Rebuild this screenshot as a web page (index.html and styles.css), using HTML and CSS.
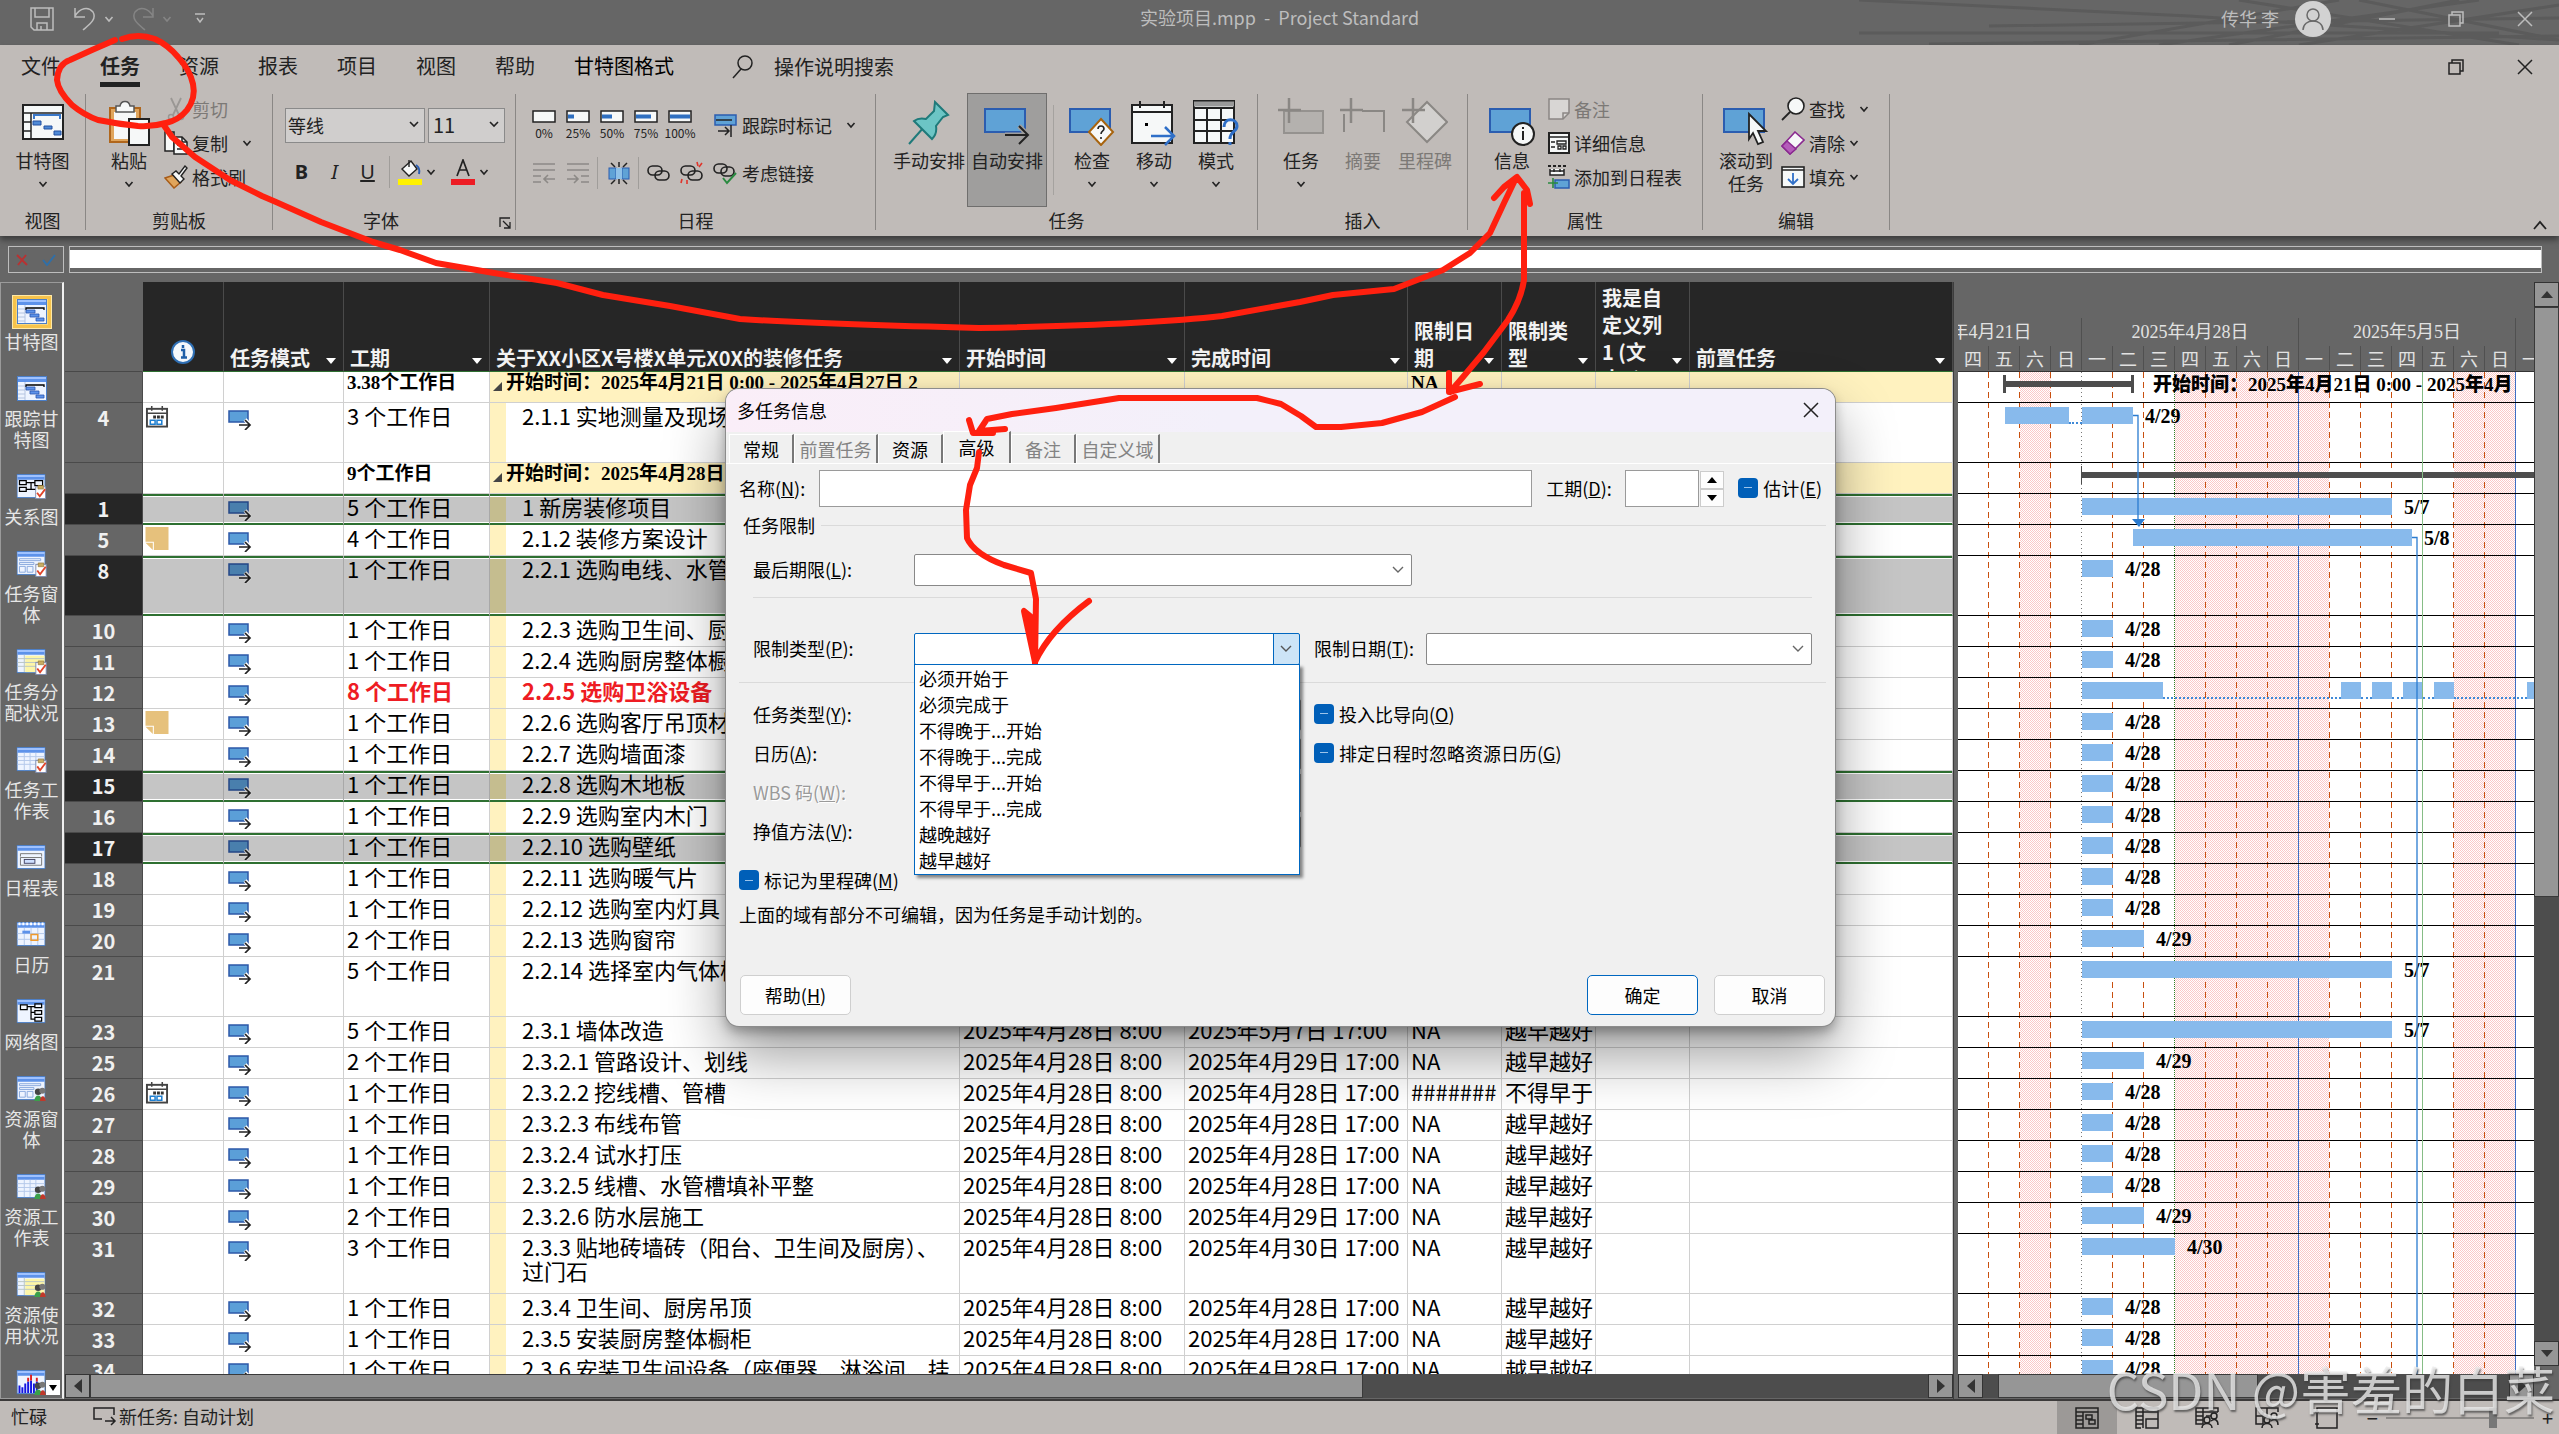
FILE: index.html
```html
<!DOCTYPE html>
<html lang="zh-CN">
<head>
<meta charset="utf-8">
<title>实验项目.mpp - Project Standard</title>
<link rel="stylesheet" href="styles.css">
</head>
<body>
<svg class="defs" aria-hidden="true">
  <symbol id="chev" viewBox="0 0 10 10"><path d="M1.500 3l3.500 4 3.500-4" fill="none" stroke="currentColor" stroke-width="1.600"/></symbol>
  <symbol id="mode" viewBox="0 0 24 20"><rect x="1" y="1" width="19" height="11" fill="#5b9fd8" stroke="#2c58a8" stroke-width="1.500"/><path d="M11 15h11M17 9.500l5 5.500-5 5" fill="none" stroke="#fff" stroke-width="4"/><path d="M11 15h11M17 10l5 5-5 5" fill="none" stroke="#222" stroke-width="1.700"/></symbol>
  <symbol id="cal" viewBox="0 0 24 24"><rect x="1.500" y="4" width="21" height="18.500" fill="#fff" stroke="#444" stroke-width="2"/><path d="M1 8.500h22M6.500 1v5M17.500 1v5" stroke="#444" stroke-width="1.600"/><path d="M8 12.500h12" stroke="#333" stroke-width="3" stroke-dasharray="3 1"/><path d="M5 16h5v4H5zM12 16h5v4h-5z" fill="#fff" stroke="#1f7fd0" stroke-width="1.600"/></symbol>
  <symbol id="note" viewBox="0 0 22 22"><path d="M0 0h22v22H8v-8H0z" fill="#e6c17c"/><path d="M0 15h7v7z" fill="#e6c17c"/></symbol>
  <symbol id="win" viewBox="0 0 30 26"><rect x=".500" y=".500" width="29" height="24" fill="#eef4ff" stroke="#4a7ec8"/><path d="M1 1h28v5H1z" fill="#5d92ea"/><path d="M1 1h28v2H1z" fill="#9fc2ff"/></symbol>
  <symbol id="v-gantt" viewBox="0 0 30 26"><use href="#win"/><path d="M1 10h7M1 14h7M1 18h7M1 22h7M8 6v18" stroke="#b4c4e0"/><path d="M9 11v-2h18v2" fill="none" stroke="#000" stroke-width="1.300"/><path d="M9 11h9v3H9zM13 15h9v3h-9zM19 19h8v3h-8z" fill="#5d92ea" stroke="#2a56b0" stroke-width=".800"/></symbol>
  <symbol id="clip" viewBox="0 0 12 16"><rect x=".500" y="2.500" width="11" height="13" fill="#fff" stroke="#7d8bb0"/><path d="M3 1h6v4H3z" fill="#c9ac62" stroke="#8a6d2c" stroke-width=".600"/><path d="M2 9l3 4 6-8" fill="none" stroke="#e0442a" stroke-width="2"/></symbol>
  <symbol id="ppl" viewBox="0 0 12 16"><circle cx="4" cy="5" r="3.500" fill="#444"/><circle cx="8.500" cy="4" r="3.200" fill="#777"/><path d="M0 15c0-8 8-8 8 0z" fill="#3ba04a"/><path d="M6 15c0-7 6-7 6 0z" fill="#c0392b"/></symbol>
  <symbol id="v-rel" viewBox="0 0 32 27"><use href="#win" width="30" height="26"/><path d="M3 7h7v4H3zM3 14h7v4H3zM19 7h8v5h-8zM10 9h9M15 9v7h-5M15 16h5" fill="none" stroke="#000" stroke-width="1.300"/><use href="#clip" x="19" y="11" width="12" height="15"/></symbol>
  <symbol id="v-form" viewBox="0 0 32 27"><use href="#win" width="30" height="26"/><path d="M3 8h22v2H3zM3 12h15v2H3zM3 16h6v6H3zM11 16h6v6h-6z" fill="none" stroke="#8aaade"/></symbol>
  <symbol id="v-sheet" viewBox="0 0 32 27"><use href="#win" width="30" height="26"/><path d="M1 10h28M1 14h28M1 18h28M8 6v18M14 6v18M20 6v18" stroke="#b4c8ea"/></symbol>
  <symbol id="v-usage" viewBox="0 0 32 27"><use href="#win" width="30" height="26"/><path d="M9 7h20v17H9z" fill="#fdf6a8"/><path d="M1 10h28M1 14h28M1 18h28M8 6v18" stroke="#b9c6c4"/></symbol>
  <symbol id="v-time" viewBox="0 0 32 27"><use href="#win" width="30" height="26"/><path d="M4 12V9h22v3M4 13h22v8H4z" fill="none" stroke="#777"/><rect x="8" y="15" width="11" height="4" fill="#cfe0ff" stroke="#446"/></symbol>
  <symbol id="v-cal" viewBox="0 0 32 27"><use href="#win" width="30" height="26"/><path d="M2 2h26" stroke="#fff" stroke-width="3" stroke-dasharray="2 2"/><path d="M1 12h28M1 18h28M8 6v18M15 6v18M22 6v18" stroke="#b4c8ea"/><path d="M6 9h8v3H6z" fill="#5d92ea"/><path d="M15 13h7v6h-7z" fill="none" stroke="#f09a2c" stroke-width="1.500"/></symbol>
  <symbol id="v-net" viewBox="0 0 32 27"><use href="#win" width="30" height="26"/><path d="M4 6h7v5H4zM19 5h7v4h-7zM19 12h7v4h-7zM19 19h7v4h-7zM11 8h8M15 8v13h4M15 14h4" fill="#fff" fill-opacity=".300" stroke="#000" stroke-width="1.300"/></symbol>
  <symbol id="v-graph" viewBox="0 0 32 27"><use href="#win" width="30" height="26"/><path d="M3 24v-8M6 24v-6M9 24V14M12 24V12M15 24V11M18 24V14M21 24V12" stroke="#1414e0" stroke-width="2"/><path d="M12 12V8M15 11V5M21 12V8" stroke="#e02020" stroke-width="2"/></symbol>
</svg>

<header class="titlebar">
  <div class="quick">
    <button aria-label="保存"><svg width="24" height="24" viewBox="0 0 24 24"><path d="M1 1h22v22H4l-3-3zM5 1v9h14V1M7 23v-7h10v7M11 19v4"/></svg></button>
    <button aria-label="撤消"><svg width="22" height="24" viewBox="0 0 22 24"><path d="M1 1v9h10M1 9C6 1 14-1 19 5c4 7-3 12-10 18"/></svg></button>
    <button class="tiny" aria-label="撤消选项"><svg width="10" height="10"><use href="#chev"/></svg></button>
    <button class="off" aria-label="恢复"><svg width="22" height="24" viewBox="0 0 22 24"><path d="M21 1v9H11M21 9C16 1 8-1 3 5c-4 7 3 12 10 18"/></svg></button>
    <button class="off tiny" aria-label="恢复选项"><svg width="10" height="10"><use href="#chev"/></svg></button>
    <button class="more" aria-label="自定义快速访问工具栏"><svg width="12" height="12" viewBox="0 0 12 12"><path d="M1 1h10M3 5l3 4 3-4"/></svg></button>
  </div>
  <h1>实验项目.mpp&nbsp; - &nbsp;Project Standard</h1>
  <div class="account">
    <svg class="streaks" viewBox="0 0 700 45" preserveAspectRatio="none" aria-hidden="true"><path d="M0 0L330 16 700 40M130 26L700 18M0 33h640M70 44L700 36M220 45L480 0M300 45L620 0M370 45L600 0M380 0L660 45M500 0L700 40M440 45L700 5"/></svg>
    <span>传华 李</span>
    <svg class="avatar" width="36" height="36" viewBox="0 0 36 36"><circle cx="18" cy="18" r="18" fill="#d2d2d2"/><g fill="none" stroke="#6a6a6a" stroke-width="1.500"><circle cx="18" cy="14" r="6"/><path d="M8 29c0-12 20-12 20 0"/></g></svg>
    <button aria-label="最小化"><svg width="16" height="16" viewBox="0 0 16 16"><path d="M0 8h16"/></svg></button>
    <button aria-label="向下还原"><svg width="16" height="16" viewBox="0 0 16 16"><path d="M1 4h11v11H1zM4 4V1h11v11h-3"/></svg></button>
    <button aria-label="关闭"><svg width="16" height="16" viewBox="0 0 16 16"><path d="M1 1l14 14M15 1L1 15"/></svg></button>
  </div>
</header>

<div class="ribbon">
  <nav class="tabs">
    <a href="#">文件</a><a href="#" class="on">任务</a><a href="#">资源</a><a href="#">报表</a><a href="#">项目</a><a href="#">视图</a><a href="#">帮助</a><a href="#" class="dark">甘特图格式</a>
    <label class="tell"><svg width="22" height="24" viewBox="0 0 22 24"><circle cx="13" cy="8" r="7"/><path d="M9 14l-8 9"/></svg><input type="text" value="操作说明搜索" aria-label="操作说明搜索"></label>
    <div class="winbtns">
      <button aria-label="还原窗口"><svg width="16" height="16" viewBox="0 0 16 16"><path d="M1 4h11v11H1zM4 4V1h11v11h-3"/></svg></button>
      <button aria-label="关闭窗口"><svg width="16" height="16" viewBox="0 0 16 16"><path d="M1 1l14 14M15 1L1 15"/></svg></button>
    </div>
  </nav>
  <div class="groups">
    <section class="group g-view">
      <div class="body">
        <button class="big"><svg width="42" height="36" viewBox="0 0 42 36"><path d="M1 1h40v34H1z" fill="#f6f8f8" stroke="#222" stroke-width="2"/><path d="M1 9h40M9 9v26M1 18h8M1 27h8" stroke="#222" stroke-width="1.500"/><path d="M12 15v-4h26v4" fill="none" stroke="#3b78c8" stroke-width="2"/><path d="M11 17h8v4h-8zM22 22h8v3h-8zM32 27h7v4h-7z" fill="#4f8ad6" stroke="#2450a0"/></svg><span>甘特图</span><svg class="ch"><use href="#chev"/></svg></button>
      </div>
      <h2>视图</h2>
    </section>
    <section class="group g-clip">
      <div class="body">
        <button class="big"><svg width="42" height="46" viewBox="0 0 42 46"><rect x="2" y="8" width="30" height="34" fill="#e0a55c" stroke="#b0661c" stroke-width="2"/><rect x="6" y="12" width="22" height="27" fill="#f6f8f8"/><path d="M8 12V6h4c1-6 9-6 10 0h4v6z" fill="#f6f8f8" stroke="#555" stroke-width="1.500"/><rect x="21" y="19" width="20" height="26" fill="#f6f8f8" stroke="#222" stroke-width="2"/></svg><span>粘贴</span><svg class="ch"><use href="#chev"/></svg></button>
        <div class="stack">
          <button class="off"><svg width="24" height="24" viewBox="0 0 24 24"><path d="M7 1l8 17M17 1L9 18" fill="none" stroke="#9a9794" stroke-width="1.800"/><circle cx="7" cy="20" r="2.500" fill="none" stroke="#9a9794" stroke-width="1.500"/><circle cx="17" cy="20" r="2.500" fill="none" stroke="#9a9794" stroke-width="1.500"/></svg>剪切</button>
          <button><svg width="24" height="24" viewBox="0 0 24 24"><path d="M1 1h9v19H1z" fill="#f6f8f8" stroke="#222" stroke-width="1.500"/><path d="M10 6h8l5 5v12H10z" fill="#f6f8f8" stroke="#222" stroke-width="1.500"/><path d="M18 6v5h5M13 14h7M13 18h7" fill="none" stroke="#222" stroke-width="1.500"/></svg>复制<svg class="ch wide"><use href="#chev"/></svg></button>
          <button><svg width="24" height="24" viewBox="0 0 24 24"><path d="M10 10L1 13l9 10 7-6z" fill="#e0a55c" stroke="#a85c18" stroke-width="1.500"/><path d="M8 9l4-3 3 3 6-8 2 2-6 8 3 3-4 4z" fill="#f6f8f8" stroke="#222" stroke-width="1.400"/></svg>格式刷</button>
        </div>
      </div>
      <h2>剪贴板</h2>
    </section>
    <section class="group g-font">
      <div class="body col">
        <div class="line combos"><select class="face" aria-label="字体"><option>等线</option></select><select class="size" aria-label="字号"><option>11</option></select></div>
        <div class="line fmt">
          <button aria-label="加粗"><b>B</b></button><button aria-label="倾斜"><i>I</i></button><button aria-label="下划线"><u>U</u></button><span class="vr"></span>
          <button aria-label="背景色"><svg width="24" height="26" viewBox="0 0 24 26"><path d="M4 10L13 2l6 8-8 7z" fill="#f6f8f8" stroke="#222" stroke-width="1.400"/><path d="M11 1v7" stroke="#222" stroke-width="1.400"/><path d="M18 6c3 2 4 5 3 9" fill="none" stroke="#2b5db0" stroke-width="2"/><path d="M0 20h24v6H0z" fill="#fff200"/></svg></button><svg class="ch"><use href="#chev"/></svg>
          <button aria-label="字体颜色"><svg width="24" height="26" viewBox="0 0 24 26"><path d="M6 17L12 1l6 16M8 11h8" fill="none" stroke="#222" stroke-width="1.700"/><path d="M0 20h24v6H0z" fill="#ed1c24"/></svg></button><svg class="ch"><use href="#chev"/></svg>
        </div>
      </div>
      <h2>字体</h2>
      <button class="launch" aria-label="字体设置"><svg width="12" height="12" viewBox="0 0 12 12"><path d="M1 10V1h10M4 4l7 7M11 5v6H5" fill="none" stroke="#222" stroke-width="1.300"/></svg></button>
    </section>
    <section class="group g-sched">
      <div class="body col">
        <div class="line pct">
          <button><svg width="24" height="13" viewBox="0 0 24 13"><rect x="1" y="1" width="22" height="11" fill="#f6f8f8" stroke="#222" stroke-width="1.500"/></svg>0%</button>
          <button><svg width="24" height="13" viewBox="0 0 24 13"><rect x="1" y="1" width="22" height="11" fill="#f6f8f8" stroke="#222" stroke-width="1.500"/><path d="M2 6.500h6" stroke="#2f6fc0" stroke-width="4"/></svg>25%</button>
          <button><svg width="24" height="13" viewBox="0 0 24 13"><rect x="1" y="1" width="22" height="11" fill="#f6f8f8" stroke="#222" stroke-width="1.500"/><path d="M2 6.500h10" stroke="#2f6fc0" stroke-width="4"/></svg>50%</button>
          <button><svg width="24" height="13" viewBox="0 0 24 13"><rect x="1" y="1" width="22" height="11" fill="#f6f8f8" stroke="#222" stroke-width="1.500"/><path d="M2 6.500h15" stroke="#2f6fc0" stroke-width="4"/></svg>75%</button>
          <button><svg width="24" height="13" viewBox="0 0 24 13"><rect x="1" y="1" width="22" height="11" fill="#f6f8f8" stroke="#222" stroke-width="1.500"/><path d="M2 6.500h20" stroke="#2f6fc0" stroke-width="4"/></svg>100%</button>
          <button class="text"><svg width="24" height="24" viewBox="0 0 24 24"><rect x="1" y="2" width="21" height="10" fill="#5fa2d6" stroke="#2b5db0" stroke-width="1.500"/><path d="M2 7h16" stroke="#222" stroke-width="1.500"/><path d="M4 18h11M11 14l4 4-4 4M17 12v12" fill="none" stroke="#222" stroke-width="1.500"/></svg>跟踪时标记<svg class="ch wide"><use href="#chev"/></svg></button>
        </div>
        <div class="line links">
          <button class="off" aria-label="降级"><svg width="22" height="22" viewBox="0 0 22 22"><path d="M0 2h22M0 8h22M0 14h8M0 20h8M22 17H11M15 13l-4 4 4 4" fill="none" stroke="#8c8986" stroke-width="1.600"/></svg></button>
          <button class="off" aria-label="升级"><svg width="22" height="22" viewBox="0 0 22 22"><path d="M0 2h22M0 8h22M14 14h8M14 20h8M0 17h11M7 13l4 4-4 4" fill="none" stroke="#8c8986" stroke-width="1.600"/></svg></button>
          <span class="vr"></span>
          <button aria-label="拆分任务"><svg width="24" height="24" viewBox="0 0 24 24"><rect x="2" y="7" width="7" height="11" fill="#5fa2d6" stroke="#2b5db0"/><rect x="15" y="7" width="7" height="11" fill="#5fa2d6" stroke="#2b5db0"/><path d="M9 7h6v11H9z" fill="#8fc1e8"/><path d="M12 1v5M12 18v5M4 2l4 4M20 2l-4 4M4 23l4-4M20 23l-4-4" stroke="#222" stroke-width="1.500"/></svg></button>
          <span class="vr"></span>
          <button aria-label="链接"><svg width="26" height="20" viewBox="0 0 26 20"><g fill="none" stroke="#222" stroke-width="1.600"><rect x="2" y="3" width="14" height="9" rx="4.500"/><rect x="9" y="8" width="14" height="9" rx="4.500"/></g></svg></button>
          <button aria-label="取消链接"><svg width="26" height="24" viewBox="0 0 26 24"><g fill="none" stroke="#222" stroke-width="1.600"><rect x="2" y="5" width="14" height="9" rx="4.500"/><rect x="9" y="10" width="14" height="9" rx="4.500"/></g><path d="M18 1l1 4M23 2l-3 4M3 18l-1 4M8 19v4" stroke="#e0342a" stroke-width="1.600"/></svg></button>
          <button class="text"><svg width="26" height="24" viewBox="0 0 26 24"><g fill="none" stroke="#222" stroke-width="1.600"><rect x="2" y="3" width="13" height="9" rx="4.500"/><rect x="9" y="6" width="13" height="9" rx="4.500"/></g><path d="M11 17l4 5 9-10" fill="none" stroke="#2a8a40" stroke-width="2"/></svg>考虑链接</button>
        </div>
      </div>
      <h2>日程</h2>
    </section>
    <section class="group g-task">
      <div class="body">
        <button class="big"><svg width="42" height="46" viewBox="0 0 42 46"><path d="M1 44l15-17" stroke="#1f7a7a" stroke-width="2"/><path d="M27 2l13 13-5 2-7 9c1 6-1 10-4 13L6 21c4-3 8-3 12-2l8-8z" fill="#6cc5c5" stroke="#1f7a7a" stroke-width="2"/></svg><span>手动安排</span></button>
        <button class="big pressed"><svg width="46" height="38" viewBox="0 0 46 38"><rect x="1" y="1" width="40" height="23" fill="#5fa2d6" stroke="#2b5db0" stroke-width="2"/><path d="M21 27h23M35 18l9 9-9 9" fill="none" stroke="#9f9e9d" stroke-width="5"/><path d="M21 27h23M35 18l9 9-9 9" fill="none" stroke="#222" stroke-width="2"/></svg><span>自动安排</span></button>
        <span class="vr"></span>
        <button class="big"><svg width="46" height="38" viewBox="0 0 46 38"><rect x="1" y="1" width="40" height="23" fill="#5fa2d6" stroke="#2b5db0" stroke-width="2"/><path d="M32 11l12 13-12 13-12-13z" fill="#f6f8f8" stroke="#a8640e" stroke-width="2"/><path d="M29 21c0-4 6-4 6 0 0 2-3 2-3 5M32 29v2" fill="none" stroke="#222" stroke-width="1.600"/></svg><span>检查</span><svg class="ch"><use href="#chev"/></svg></button>
        <button class="big"><svg width="46" height="46" viewBox="0 0 46 46"><rect x="1" y="5" width="40" height="38" fill="#f6f8f8" stroke="#222" stroke-width="2"/><path d="M1 12h40M9 1v7M33 1v7" stroke="#222" stroke-width="2"/><path d="M14 23h3v3h-3z"/><path d="M20 36h23M34 27l9 9-9 9" fill="none" stroke="#2f6fc8" stroke-width="2.500"/></svg><span>移动</span><svg class="ch"><use href="#chev"/></svg></button>
        <button class="big"><svg width="46" height="46" viewBox="0 0 46 46"><rect x="1" y="1" width="40" height="42" fill="#f6f8f8" stroke="#222" stroke-width="2"/><path d="M1 4h40" stroke="#999" stroke-width="5"/><path d="M1 8h40M1 20h40M1 31h40M14 8v35M28 8v35" stroke="#222" stroke-width="2"/><path d="M31 27c0-10 13-9 13-1 0 6-7 5-7 13M37 42v3" fill="none" stroke="#2f6fc8" stroke-width="3"/></svg><span>模式</span><svg class="ch"><use href="#chev"/></svg></button>
      </div>
      <h2>任务</h2>
    </section>
    <section class="group g-ins">
      <div class="body">
        <button class="big"><svg width="46" height="48" viewBox="0 0 46 48"><rect x="6" y="13" width="39" height="22" fill="#b4b1ae" stroke="#95928f" stroke-width="2"/><path d="M11 0v25M0 12h23" stroke="#8a8784" stroke-width="2.500"/></svg><span>任务</span><svg class="ch"><use href="#chev"/></svg></button>
        <button class="big off"><svg width="46" height="48" viewBox="0 0 46 48"><path d="M4 34V16M22 13h22v21" fill="none" stroke="#8a8784" stroke-width="2"/><path d="M11 0v25M0 12h23" stroke="#8a8784" stroke-width="2.500"/></svg><span>摘要</span></button>
        <button class="big off"><svg width="46" height="48" viewBox="0 0 46 48"><path d="M25 4l20 20-20 20L5 24z" fill="#d2d0ce" stroke="#8a8784" stroke-width="2"/><path d="M11 0v25M0 12h23" stroke="#8a8784" stroke-width="2.500"/></svg><span>里程碑</span></button>
      </div>
      <h2>插入</h2>
    </section>
    <section class="group g-prop">
      <div class="body">
        <button class="big"><svg width="46" height="38" viewBox="0 0 46 38"><rect x="1" y="1" width="40" height="23" fill="#5fa2d6" stroke="#2b5db0" stroke-width="2"/><circle cx="34" cy="26" r="11" fill="#f6f8f8" stroke="#222" stroke-width="2"/><path d="M34 23v9M34 19v2" stroke="#222" stroke-width="2"/></svg><span>信息</span></button>
        <div class="stack">
          <button class="off"><svg width="22" height="22" viewBox="0 0 22 22"><path d="M1 1h20v14l-6 6H1z" fill="#d8d6d4" stroke="#8a8784" stroke-width="1.500"/><path d="M21 15h-6v6" fill="none" stroke="#8a8784" stroke-width="1.500"/></svg>备注</button>
          <button><svg width="22" height="22" viewBox="0 0 22 22"><rect x="1" y="1" width="20" height="20" fill="#f6f8f8" stroke="#222" stroke-width="2"/><path d="M1 5h20M3 10h4M9 9h9v3H9zM3 15h4M10 14h3v3h-3zM15 14h3v3h-3z" fill="none" stroke="#222" stroke-width="1.300"/></svg>详细信息</button>
          <button><svg width="22" height="24" viewBox="0 0 22 24"><path d="M0 1h18" stroke="#222" stroke-width="2" stroke-dasharray="3 2"/><path d="M2 4v6h14V4M2 6h14M6 4v3M12 4v3" fill="#f6f8f8" stroke="#222" stroke-width="1.500"/><rect x="7" y="15" width="14" height="8" fill="#5fa2d6" stroke="#2b5db0" stroke-width="1.500"/><path d="M5 13v10M0 18h10" stroke="#2a8a40" stroke-width="1.600"/></svg>添加到日程表</button>
        </div>
      </div>
      <h2>属性</h2>
    </section>
    <section class="group g-edit">
      <div class="body">
        <button class="big scrollto"><svg width="46" height="38" viewBox="0 0 46 38"><rect x="1" y="1" width="40" height="23" fill="#5fa2d6" stroke="#2b5db0" stroke-width="2"/><path d="M26 6l17 17h-8l5 11-5 2-5-11-4 6z" fill="#f6f8f8" stroke="#222" stroke-width="1.800"/></svg><span>滚动到<br>任务</span></button>
        <div class="stack">
          <button><svg width="24" height="24" viewBox="0 0 24 24"><circle cx="15" cy="9" r="8" fill="#f6f8f8" stroke="#222" stroke-width="1.600"/><path d="M9 15l-8 8" stroke="#222" stroke-width="1.800"/></svg>查找<svg class="ch wide"><use href="#chev"/></svg></button>
          <button><svg width="24" height="24" viewBox="0 0 24 24"><path d="M14 1l9 8-14 14-8-8z" fill="#f6f8f8" stroke="#8a2a90" stroke-width="1.600"/><path d="M6 10l9 8-6 5-8-8z" fill="#b45cba" stroke="#8a2a90" stroke-width="1.500"/></svg>清除<svg class="ch"><use href="#chev"/></svg></button>
          <button><svg width="24" height="22" viewBox="0 0 24 22"><rect x="1" y="1" width="22" height="20" fill="#f6f8f8" stroke="#222" stroke-width="1.600"/><path d="M1 4h22" stroke="#222" stroke-width="1.500"/><path d="M12 7v11M7 13l5 5 5-5" fill="none" stroke="#2f6fc8" stroke-width="1.800"/></svg>填充<svg class="ch"><use href="#chev"/></svg></button>
        </div>
      </div>
      <h2>编辑</h2>
    </section>
    <button class="collapse" aria-label="折叠功能区"><svg width="16" height="10" viewBox="0 0 16 10"><path d="M2 9l6-7 6 7" fill="none" stroke="#222" stroke-width="1.800"/></svg></button>
  </div>
</div>

<div class="entry">
  <div class="okbox"><button aria-label="取消输入"><svg width="12" height="12" viewBox="0 0 12 12"><path d="M1 1l10 10M10 1L2 11" stroke="#b83232" stroke-width="2"/></svg></button><button aria-label="确认输入"><svg width="14" height="12" viewBox="0 0 14 12"><path d="M1 6l4 5 8-10" fill="none" stroke="#2f6fa8" stroke-width="2"/></svg></button></div>
  <div class="entrybox"><input type="text" aria-label="输入栏"></div>
</div>

<main class="work">
  <nav class="views">
    <a href="#" class="cur"><svg><use href="#v-gantt"/></svg>甘特图</a>
    <a href="#"><svg><use href="#v-gantt"/></svg>跟踪甘<br>特图</a>
    <a href="#"><svg><use href="#v-rel"/></svg>关系图</a>
    <a href="#"><svg><use href="#v-form"/><use href="#clip" x="19" y="11" width="12" height="15"/></svg>任务窗<br>体</a>
    <a href="#"><svg><use href="#v-usage"/><use href="#clip" x="19" y="11" width="12" height="15"/></svg>任务分<br>配状况</a>
    <a href="#"><svg><use href="#v-sheet"/><use href="#clip" x="19" y="11" width="12" height="15"/></svg>任务工<br>作表</a>
    <a href="#"><svg><use href="#v-time"/></svg>日程表</a>
    <a href="#"><svg><use href="#v-cal"/></svg>日历</a>
    <a href="#"><svg><use href="#v-net"/></svg>网络图</a>
    <a href="#"><svg><use href="#v-form"/><use href="#ppl" x="18" y="11" width="12" height="15"/></svg>资源窗<br>体</a>
    <a href="#"><svg><use href="#v-sheet"/><use href="#ppl" x="18" y="11" width="12" height="15"/></svg>资源工<br>作表</a>
    <a href="#"><svg><use href="#v-usage"/><use href="#ppl" x="18" y="11" width="12" height="15"/></svg>资源使<br>用状况</a>
    <a href="#" aria-label="资源图表"><svg><use href="#v-graph"/><use href="#ppl" x="18" y="11" width="12" height="15"/></svg></a>
    <button class="viewmore" aria-label="更多视图"><svg width="8" height="6" viewBox="0 0 8 6"><path d="M0 0h8L4 6z"/></svg></button>
  </nav>

  <section class="pane">
    <div class="clip">
      <table class="grid">
        <colgroup><col class="c-id"><col class="c-info"><col class="c-mode"><col class="c-dur"><col class="c-name"><col class="c-start"><col class="c-fin"><col class="c-s"><col class="c-s"><col class="c-s"><col></colgroup>
        <thead><tr>
          <th class="corner"></th>
          <th><div class="hd mid"><svg width="26" height="26" viewBox="0 0 26 26"><circle cx="13" cy="13" r="11" fill="#f4f8fc" stroke="#2f6fb4" stroke-width="2"/><path d="M11 11h3v7M11 18.500h6M13 6v3" fill="none" stroke="#1f5fa8" stroke-width="2.500"/></svg></div></th>
          <th><div class="hd">任务模式<i></i></div></th>
          <th><div class="hd">工期<i></i></div></th>
          <th><div class="hd">关于XX小区X号楼X单元X0X的装修任务<i></i></div></th>
          <th><div class="hd">开始时间<i></i></div></th>
          <th><div class="hd">完成时间<i></i></div></th>
          <th><div class="hd"><span>限制日期</span><i></i></div></th>
          <th><div class="hd"><span>限制类型</span><i></i></div></th>
          <th><div class="hd tall"><span>我是自定义列<br>1 (文<br>本1)</span><i></i></div></th>
          <th><div class="hd">前置任务<i></i></div></th>
        </tr></thead>
        <tbody>
          <tr class="grp"><th></th><td></td><td></td><td>3.38个工作日</td><td class="gname">开始时间：2025年4月21日 0:00 - 2025年4月27日 2</td><td></td><td></td><td>NA</td><td></td><td></td><td></td></tr>
          <tr class="dbl"><th>4</th><td><svg class="ind"><use href="#cal"/></svg></td><td><svg class="mode"><use href="#mode"/></svg></td><td>3 个工作日</td><td class="name">2.1.1 实地测量及现场</td><td colspan="6"></td></tr>
          <tr class="grp"><th></th><td></td><td></td><td>9个工作日</td><td class="gname">开始时间：2025年4月28日</td><td colspan="6"></td></tr>
          <tr class="sel"><th>1</th><td></td><td><svg class="mode"><use href="#mode"/></svg></td><td>5 个工作日</td><td class="name">1 新房装修项目</td><td colspan="6"></td></tr>
          <tr><th>5</th><td><svg class="ind"><use href="#note"/></svg></td><td><svg class="mode"><use href="#mode"/></svg></td><td>4 个工作日</td><td class="name">2.1.2 装修方案设计</td><td colspan="6"></td></tr>
          <tr class="sel dbl"><th>8</th><td></td><td><svg class="mode"><use href="#mode"/></svg></td><td>1 个工作日</td><td class="name">2.2.1 选购电线、水管</td><td colspan="6"></td></tr>
          <tr><th>10</th><td></td><td><svg class="mode"><use href="#mode"/></svg></td><td>1 个工作日</td><td class="name">2.2.3 选购卫生间、厨</td><td colspan="6"></td></tr>
          <tr><th>11</th><td></td><td><svg class="mode"><use href="#mode"/></svg></td><td>1 个工作日</td><td class="name">2.2.4 选购厨房整体橱</td><td colspan="6"></td></tr>
          <tr class="hot"><th>12</th><td></td><td><svg class="mode"><use href="#mode"/></svg></td><td>8 个工作日</td><td class="name">2.2.5 选购卫浴设备</td><td colspan="6"></td></tr>
          <tr><th>13</th><td><svg class="ind"><use href="#note"/></svg></td><td><svg class="mode"><use href="#mode"/></svg></td><td>1 个工作日</td><td class="name">2.2.6 选购客厅吊顶材</td><td colspan="6"></td></tr>
          <tr><th>14</th><td></td><td><svg class="mode"><use href="#mode"/></svg></td><td>1 个工作日</td><td class="name">2.2.7 选购墙面漆</td><td colspan="6"></td></tr>
          <tr class="sel"><th>15</th><td></td><td><svg class="mode"><use href="#mode"/></svg></td><td>1 个工作日</td><td class="name">2.2.8 选购木地板</td><td colspan="6"></td></tr>
          <tr><th>16</th><td></td><td><svg class="mode"><use href="#mode"/></svg></td><td>1 个工作日</td><td class="name">2.2.9 选购室内木门</td><td colspan="6"></td></tr>
          <tr class="sel"><th>17</th><td></td><td><svg class="mode"><use href="#mode"/></svg></td><td>1 个工作日</td><td class="name">2.2.10 选购壁纸</td><td colspan="6"></td></tr>
          <tr><th>18</th><td></td><td><svg class="mode"><use href="#mode"/></svg></td><td>1 个工作日</td><td class="name">2.2.11 选购暖气片</td><td colspan="6"></td></tr>
          <tr><th>19</th><td></td><td><svg class="mode"><use href="#mode"/></svg></td><td>1 个工作日</td><td class="name">2.2.12 选购室内灯具</td><td colspan="6"></td></tr>
          <tr><th>20</th><td></td><td><svg class="mode"><use href="#mode"/></svg></td><td>2 个工作日</td><td class="name">2.2.13 选购窗帘</td><td colspan="6"></td></tr>
          <tr class="dbl"><th>21</th><td></td><td><svg class="mode"><use href="#mode"/></svg></td><td>5 个工作日</td><td class="name">2.2.14 选择室内气体检</td><td colspan="6"></td></tr>
          <tr><th>23</th><td></td><td><svg class="mode"><use href="#mode"/></svg></td><td>5 个工作日</td><td class="name">2.3.1 墙体改造</td><td>2025年4月28日 8:00</td><td>2025年5月7日 17:00</td><td>NA</td><td>越早越好</td><td></td><td></td></tr>
          <tr><th>25</th><td></td><td><svg class="mode"><use href="#mode"/></svg></td><td>2 个工作日</td><td class="name">2.3.2.1 管路设计、划线</td><td>2025年4月28日 8:00</td><td>2025年4月29日 17:00</td><td>NA</td><td>越早越好</td><td></td><td></td></tr>
          <tr><th>26</th><td><svg class="ind"><use href="#cal"/></svg></td><td><svg class="mode"><use href="#mode"/></svg></td><td>1 个工作日</td><td class="name">2.3.2.2 挖线槽、管槽</td><td>2025年4月28日 8:00</td><td>2025年4月28日 17:00</td><td>#######</td><td>不得早于</td><td></td><td></td></tr>
          <tr><th>27</th><td></td><td><svg class="mode"><use href="#mode"/></svg></td><td>1 个工作日</td><td class="name">2.3.2.3 布线布管</td><td>2025年4月28日 8:00</td><td>2025年4月28日 17:00</td><td>NA</td><td>越早越好</td><td></td><td></td></tr>
          <tr><th>28</th><td></td><td><svg class="mode"><use href="#mode"/></svg></td><td>1 个工作日</td><td class="name">2.3.2.4 试水打压</td><td>2025年4月28日 8:00</td><td>2025年4月28日 17:00</td><td>NA</td><td>越早越好</td><td></td><td></td></tr>
          <tr><th>29</th><td></td><td><svg class="mode"><use href="#mode"/></svg></td><td>1 个工作日</td><td class="name">2.3.2.5 线槽、水管槽填补平整</td><td>2025年4月28日 8:00</td><td>2025年4月28日 17:00</td><td>NA</td><td>越早越好</td><td></td><td></td></tr>
          <tr><th>30</th><td></td><td><svg class="mode"><use href="#mode"/></svg></td><td>2 个工作日</td><td class="name">2.3.2.6 防水层施工</td><td>2025年4月28日 8:00</td><td>2025年4月29日 17:00</td><td>NA</td><td>越早越好</td><td></td><td></td></tr>
          <tr class="dbl"><th>31</th><td></td><td><svg class="mode"><use href="#mode"/></svg></td><td>3 个工作日</td><td class="name">2.3.3 贴地砖墙砖（阳台、卫生间及厨房）、<br>过门石</td><td>2025年4月28日 8:00</td><td>2025年4月30日 17:00</td><td>NA</td><td>越早越好</td><td></td><td></td></tr>
          <tr><th>32</th><td></td><td><svg class="mode"><use href="#mode"/></svg></td><td>1 个工作日</td><td class="name">2.3.4 卫生间、厨房吊顶</td><td>2025年4月28日 8:00</td><td>2025年4月28日 17:00</td><td>NA</td><td>越早越好</td><td></td><td></td></tr>
          <tr><th>33</th><td></td><td><svg class="mode"><use href="#mode"/></svg></td><td>1 个工作日</td><td class="name">2.3.5 安装厨房整体橱柜</td><td>2025年4月28日 8:00</td><td>2025年4月28日 17:00</td><td>NA</td><td>越早越好</td><td></td><td></td></tr>
          <tr><th>34</th><td></td><td><svg class="mode"><use href="#mode"/></svg></td><td>1 个工作日</td><td class="name">2.3.6 安装卫生间设备（座便器、淋浴间、挂</td><td>2025年4月28日 8:00</td><td>2025年4月28日 17:00</td><td>NA</td><td>越早越好</td><td></td><td></td></tr>
        </tbody>
      </table>
    </div>
    <div class="hbar"><button aria-label="向左"><svg class="tri"><path d="M8 0v14L0 7z"/></svg></button><span class="thumb t1"></span><span class="fill f1"></span><button aria-label="向右"><svg class="tri"><path d="M0 0v14l8-7z"/></svg></button></div>
  </section>

  <section class="pane chart">
    <div class="clip">
      <div class="scale">
        <div class="weeks"><span>2025年4月21日</span><span>2025年4月28日</span><span>2025年5月5日</span></div>
        <div class="days"><span>四</span><span>五</span><span>六</span><span>日</span><span>一</span><span>二</span><span>三</span><span>四</span><span>五</span><span>六</span><span>日</span><span>一</span><span>二</span><span>三</span><span>四</span><span>五</span><span>六</span><span>日</span><span>一</span></div>
      </div>
      <div class="plot">
        <svg class="back" width="576" height="1003" aria-hidden="true">
          <defs><pattern id="hatch" width="2" height="2" patternUnits="userSpaceOnUse"><rect width="2" height="2" fill="#fff"/><path d="M0 0h1v1H0zM1 1h1v1H1z" fill="#fbc8c8"/></pattern></defs>
          <path d="M62 0h31v1003H62zM216 0h155v1003H216zM496 0h61v1003h-61z" fill="url(#hatch)"/>
          <path d="M30.500 0v1003M61.500 0v1003M92.500 0v1003M154.500 0v1003M185.500 0v1003M247.500 0v1003M278.500 0v1003M309.500 0v1003M371.500 0v1003M402.500 0v1003M433.500 0v1003M495.500 0v1003M526.500 0v1003" stroke="#c8500f" stroke-dasharray="6 4"/>
          <path d="M123.500 0v1003" stroke="#777" stroke-dasharray="1 3"/>
          <path d="M216.500 0v1003" stroke="#2f7d1f" stroke-dasharray="1 1"/>
          <path d="M340.500 0v1003M557.500 0v1003" stroke="#3f6fc4"/>
        </svg>
        <div class="rows">
          <div class="r"><span class="sum" style="margin-left:45px;width:131px"></span><b class="long">开始时间：2025年4月21日 0:00 - 2025年4月</b></div>
          <div class="r d"><span class="bar" style="margin-left:47px;width:64px"></span><span class="dots" style="width:13px"></span><span class="bar" style="width:51px"></span><b>4/29</b></div>
          <div class="r"><span class="sum open" style="margin-left:123px;width:460px"></span></div>
          <div class="r"><span class="bar" style="margin-left:124px;width:310px"></span><b>5/7</b></div>
          <div class="r"><span class="bar" style="margin-left:175px;width:279px"></span><b>5/8</b></div>
          <div class="r d"><span class="bar" style="margin-left:124px;width:31px"></span><b>4/28</b></div>
          <div class="r"><span class="bar" style="margin-left:124px;width:31px"></span><b>4/28</b></div>
          <div class="r"><span class="bar" style="margin-left:124px;width:31px"></span><b>4/28</b></div>
          <div class="r"><span class="bar" style="margin-left:124px;width:81px"></span><span class="dots" style="width:178px"></span><span class="bar" style="width:20px"></span><span class="dots" style="width:11px"></span><span class="bar" style="width:20px"></span><span class="dots" style="width:11px"></span><span class="bar" style="width:20px"></span><span class="dots" style="width:11px"></span><span class="bar" style="width:20px"></span><span class="dots" style="width:73px"></span><span class="bar" style="width:20px"></span></div>
          <div class="r"><span class="bar" style="margin-left:124px;width:31px"></span><b>4/28</b></div>
          <div class="r"><span class="bar" style="margin-left:124px;width:31px"></span><b>4/28</b></div>
          <div class="r"><span class="bar" style="margin-left:124px;width:31px"></span><b>4/28</b></div>
          <div class="r"><span class="bar" style="margin-left:124px;width:31px"></span><b>4/28</b></div>
          <div class="r"><span class="bar" style="margin-left:124px;width:31px"></span><b>4/28</b></div>
          <div class="r"><span class="bar" style="margin-left:124px;width:31px"></span><b>4/28</b></div>
          <div class="r"><span class="bar" style="margin-left:124px;width:31px"></span><b>4/28</b></div>
          <div class="r"><span class="bar" style="margin-left:124px;width:62px"></span><b>4/29</b></div>
          <div class="r d"><span class="bar" style="margin-left:124px;width:310px"></span><b>5/7</b></div>
          <div class="r"><span class="bar" style="margin-left:124px;width:310px"></span><b>5/7</b></div>
          <div class="r"><span class="bar" style="margin-left:124px;width:62px"></span><b>4/29</b></div>
          <div class="r"><span class="bar" style="margin-left:124px;width:31px"></span><b>4/28</b></div>
          <div class="r"><span class="bar" style="margin-left:124px;width:31px"></span><b>4/28</b></div>
          <div class="r"><span class="bar" style="margin-left:124px;width:31px"></span><b>4/28</b></div>
          <div class="r"><span class="bar" style="margin-left:124px;width:31px"></span><b>4/28</b></div>
          <div class="r"><span class="bar" style="margin-left:124px;width:62px"></span><b>4/29</b></div>
          <div class="r d"><span class="bar" style="margin-left:124px;width:93px"></span><b>4/30</b></div>
          <div class="r"><span class="bar" style="margin-left:124px;width:31px"></span><b>4/28</b></div>
          <div class="r"><span class="bar" style="margin-left:124px;width:31px"></span><b>4/28</b></div>
          <div class="r"><span class="bar" style="margin-left:124px;width:31px"></span><b>4/28</b></div>
        </div>
        <svg class="front" width="576" height="1003" aria-hidden="true"><path d="M175 43.500h5v104M454 165.500h5V1003" fill="none" stroke="#2a7bd0" stroke-width="1.300"/><path d="M174 147h13l-6 8z" fill="#2a7bd0"/><path d="M464.500 0v1003" stroke="#86bd86"/></svg>
      </div>
    </div>
    <div class="hbar"><button aria-label="向左滚动"><svg class="tri"><path d="M8 0v14L0 7z"/></svg></button><span class="gap"></span><span class="thumb t2"></span><span class="fill"></span><button aria-label="向右滚动"><svg class="tri"><path d="M0 0v14l8-7z"/></svg></button></div>
  </section>
  <div class="vbar"><button aria-label="向上滚动"><svg width="12" height="7" viewBox="0 0 12 7"><path d="M0 7h12L6 0z"/></svg></button><span class="vthumb"></span><span class="fill"></span><button aria-label="向下滚动"><svg width="12" height="7" viewBox="0 0 12 7"><path d="M0 0h12L6 7z"/></svg></button></div>
</main>

<footer class="status">
  <span class="busy">忙碌</span>
  <button class="newtask"><svg width="24" height="20" viewBox="0 0 24 20"><path d="M9 13H1V2h20v7M12 15h10M18 11l4 4-4 4" fill="none" stroke="#222" stroke-width="1.500"/></svg>新任务: 自动计划</button>
  <div class="viewbtns">
    <button class="on" aria-label="甘特图"><svg viewBox="0 0 24 22"><path d="M1 1h22v20H1zM1 5h22M8 5v16M1 9h7M1 13h7M1 17h7M11 8h6v4h-6zM14 13h6v4h-6z"/></svg></button>
    <button aria-label="任务分配状况"><svg viewBox="0 0 24 22"><path d="M6 21H1V1h22v12M1 5h22M8 1v20M1 9h7M1 13h7M1 17h7M11 12h12v9H11z"/></svg></button>
    <button aria-label="工作组规划器"><svg viewBox="0 0 24 22"><path d="M8 17H1V1h22v4M1 5h22M8 1v16M1 9h7M1 13h7M11 9h5"/><circle cx="12" cy="13" r="3"/><path d="M7 21c0-6 10-6 10 0"/><circle cx="19" cy="9" r="3"/><path d="M16 14c4-3 7-1 7 4"/></svg></button>
    <button aria-label="资源工作表"><svg viewBox="0 0 24 22"><path d="M8 17H1V1h22v4M1 9h12M12 1v8M8 5v12"/><circle cx="12" cy="13" r="3"/><path d="M7 21c0-6 10-6 10 0"/><circle cx="19" cy="9" r="3"/><path d="M16 14c4-3 7-1 7 4"/></svg></button>
    <button aria-label="报表"><svg viewBox="0 0 24 22"><path d="M2 1h20v20H2zM0 5h4M0 17h4"/></svg></button>
  </div>
  <label class="zoom"><span>−</span><input type="range" min="0" max="100" value="74" aria-label="缩放"><span>+</span></label>
</footer>

<section class="dialog" role="dialog" aria-label="多任务信息">
  <div class="dtitle"><span>多任务信息</span><button aria-label="关闭对话框"><svg width="16" height="16" viewBox="0 0 16 16"><path d="M1 1l14 14M15 1L1 15" stroke="#222" stroke-width="1.500"/></svg></button></div>
  <div class="dtabs"><button>常规</button><button class="wide" disabled>前置任务</button><button>资源</button><button class="act">高级</button><button disabled>备注</button><button class="wide" disabled>自定义域</button></div>
  <div class="dbody">
    <div class="f-name"><label for="nm">名称(<u>N</u>):</label><input id="nm" type="text"><label for="du" class="dlab">工期(<u>D</u>):</label><input id="du" type="text" class="dur"><span class="spin"><button aria-label="增加"><svg width="10" height="6" viewBox="0 0 10 6"><path d="M0 6h10L5 0z"/></svg></button><button aria-label="减少"><svg width="10" height="6" viewBox="0 0 10 6"><path d="M0 0h10L5 6z"/></svg></button></span><label class="chk"><input type="checkbox" checked>估计(<u>E</u>)</label></div>
    <div class="legend">任务限制</div>
    <div class="f-row dead"><label for="dl">最后期限(<u>L</u>):</label><select id="dl"></select></div>
    <hr class="in">
    <div class="f-row type"><label for="tp">限制类型(<u>P</u>):</label><div class="combo"><select id="tp" class="open"></select>
      <ul class="list" role="listbox"><li>必须开始于</li><li>必须完成于</li><li>不得晚于...开始</li><li>不得晚于...完成</li><li>不得早于...开始</li><li>不得早于...完成</li><li>越晚越好</li><li>越早越好</li></ul></div>
      <label for="dt" class="second">限制日期(<u>T</u>):</label><select id="dt"></select></div>
    <hr>
    <div class="cols">
      <div class="left">
        <div class="f-row"><label for="ty">任务类型(<u>Y</u>):</label><select id="ty"></select></div>
        <div class="f-row"><label for="ca">日历(<u>A</u>):</label><select id="ca"></select></div>
        <div class="f-row"><label for="wb" class="dim">WBS 码(<u>W</u>):</label><input id="wb" type="text" disabled></div>
        <div class="f-row"><label for="ev">挣值方法(<u>V</u>):</label><select id="ev"></select></div>
      </div>
      <div class="right"><label class="chk"><input type="checkbox" checked>投入比导向(<u>O</u>)</label><label class="chk"><input type="checkbox" checked>排定日程时忽略资源日历(<u>G</u>)</label></div>
    </div>
    <label class="chk mile"><input type="checkbox" checked>标记为里程碑(<u>M</u>)</label>
    <p>上面的域有部分不可编辑，因为任务是手动计划的。</p>
    <div class="btns"><button>帮助(<u>H</u>)</button><button class="ok">确定</button><button>取消</button></div>
  </div>
</section>

<svg class="ink" width="2559" height="1434" viewBox="0 0 2559 1434" aria-hidden="true">
  <g fill="none" stroke="#ff200f" stroke-width="6" stroke-linejoin="round" stroke-linecap="round">
    <path d="M122 39Q138 33 155 39 168 45 178 57 190 70 193 84 196 98 187 110 179 120 166 123 152 127 138 126 118 124 98 120 84 115 72 105 58 91 57 80 58 64 70 60L92 50 115 40"/>
    <path d="M163 124L172 137 195 157 230 180 262 196 276 202 321 222 373 242 400 250 436 263 494 273 557 283 603 295 670 306 740 319Q816 324 979 328 1142 325 1222 316L1300 302 1333 295 1394 289 1443 270 1470 253 1490 233 1504 203 1516 178M1494 198L1504 187 1517 177 1527 190 1530 204M1524 193V280Q1521 300 1508 320L1484 352 1463 377 1450 392M1449 373V392L1480 384M1455 397L1422 412 1382 423 1341 427 1316 427 1301 416 1281 404 1257 398H1119L1056 408 1012 414 987 419 979 431 1005 429M969 420L973 433H993"/>
    <path d="M979 452L977 468 970 485 966 510 967 538Q974 554 1004 565L1031 573 1036 599 1035 664M1035 662Q1050 630 1089 601"/>
    <path d="M1024 611L1035 662 1035 620z" fill="#ff200f"/>
  </g>
</svg>
<div class="mark">CSDN @害羞的白菜</div>
</body>
</html>
```

FILE: styles.css
```css
* { box-sizing: border-box; }
html, body { height: 100%; margin: 0; }
body {
  display: flex; flex-direction: column; overflow: hidden; position: relative;
  background: #666; color: #222;
  font: 18px/22px "Noto Sans CJK SC", "Noto Sans", sans-serif;
}
button, input, select { font: inherit; color: inherit; margin: 0; }
button { border: 0; background: none; padding: 0; }
a { color: inherit; text-decoration: none; }
h1, h2, p, ul { margin: 0; padding: 0; font-weight: 400; font-size: 18px; }
svg { display: block; flex: none; }
.defs { position: absolute; width: 0; height: 0; }

/* title bar */
.titlebar { display: grid; grid-template-columns: 1fr auto 1fr; align-items: center; height: 45px; padding-bottom: 7px; flex: none; color: #bdbdbd; }
.titlebar h1 { line-height: 26px; padding-bottom: 4px; }
.titlebar svg { fill: none; stroke: currentColor; stroke-width: 1.500; }
.quick { display: flex; align-items: center; padding-left: 30px; }
.quick button { margin-right: 20px; }
.quick .tiny { margin: 0 18px 0 -12px; }
.quick .off { color: #858585; }
.quick .more { margin-left: 4px; }
.account { display: flex; align-items: center; justify-content: flex-end; position: relative; padding-right: 26px; }
.account span { padding-bottom: 3px; }
.account .avatar { margin: 0 48px 0 16px; stroke: none; }
.account button { margin-left: 53px; }
.account .avatar + button { margin-left: 0; margin-right: 0; }
.streaks { position: absolute; right: 0; top: -1px; width: 700px; height: 45px; }
.titlebar .streaks { stroke: #5b5b5b; stroke-width: 3; z-index: -1; }

/* ribbon */
.ribbon { background: #c0bbb8; height: 191px; flex: none; box-shadow: 0 4px 6px #3c3c3c; position: relative; }
.tabs { display: flex; height: 48px; padding-left: 21px; gap: 39px; font-size: 20px; line-height: 42px; }
.tabs a { height: 42px; }
.tabs a.on { font-weight: 700; border-bottom: 5px solid #222; }
.tabs a.dark { color: #000; }
.tell { display: flex; gap: 20px; margin-left: 19px; align-items: center; height: 44px; }
.tell svg { fill: none; stroke: #222; stroke-width: 1.500; }
.tell input { border: 0; background: none; padding: 0; width: 200px; line-height: 30px; }
.winbtns { display: flex; gap: 53px; margin-left: auto; padding-right: 26px; align-items: center; height: 44px; }
.winbtns svg { fill: none; stroke: #222; stroke-width: 1.500; }
.groups { display: flex; height: 143px; position: relative; }
.group { position: relative; flex: none; border-right: 1px solid #8a8785; height: 136px; margin-top: 1px; }
.group h2 { text-align: center; line-height: 26px; }
.body { display: flex; height: 113px; }
.body.col { flex-direction: column; }
.g-view { width: 86px; } .g-clip { width: 187px; } .g-font { width: 243px; } .g-sched { width: 360px; }
.g-task { width: 382px; } .g-ins { width: 210px; } .g-prop { width: 235px; } .g-edit { width: 187px; }
.group.g-font h2 { padding-right: 26px; }
.big { display: flex; flex-direction: column; align-items: center; white-space: nowrap; width: 62px; height: 112px; }
.big > svg:first-child { margin: auto 0 3px; }
.big span { line-height: 22px; margin-bottom: 35px; }
.big:has(.ch) span { margin-bottom: 8px; }
.big .ch { margin-bottom: 17px; }
.g-view .big { width: 86px; }
.g-view .big > svg:first-child { margin-bottom: 9px; }
.ch { width: 10px; height: 10px; }
.ch.wide { margin-left: 10px; }
.stack { display: flex; flex-direction: column; height: 102px; margin-top: -2px; }
.stack button { display: flex; align-items: center; gap: 4px; height: 34px; white-space: nowrap; }
.off { color: #7c7976; }
.g-clip .body { padding-left: 14px; }
.g-clip .big { width: 58px; margin-right: 6px; }
.line { display: flex; align-items: center; }
.combos { gap: 3px; padding-left: 12px; height: 62px; }
.combos select { appearance: none; height: 35px; border: 1px solid #8a8a8a; border-radius: 0; padding: 0 6px 0 2px;
  background: #d0cecd url("data:image/svg+xml,%3Csvg xmlns='http://www.w3.org/2000/svg' width='16' height='10'%3E%3Cpath d='M2 2l4 4 4-4' fill='none' stroke='%23222' stroke-width='1.600'/%3E%3C/svg%3E") no-repeat right 50%; }
.face { width: 140px; } .size { width: 77px; }
.combos .size { padding-left: 4px; font-size: 20px; }
.fmt { height: 32px; padding-left: 12px; font-size: 20px; }
.fmt button { width: 33px; display: flex; justify-content: center; font-family: "Noto Sans", sans-serif; }
.vr { width: 1px; height: 32px; background: #a09d9a; flex: none; }
.fmt .vr { margin: 0 3px 0 5px; }
.fmt .ch { margin: 0; }
.fmt .ch + button { margin-left: 10px; }
.launch { position: absolute; right: 4px; bottom: 1px; }
.pct { height: 62px; padding-left: 11px; }
.pct button { width: 34px; display: flex; flex-direction: column; align-items: center; font-size: 12px; line-height: 16px; gap: 2px; height: 31px; }
.pct .text, .links .text { width: auto; flex-direction: row; gap: 4px; font-size: 18px; line-height: 22px; white-space: nowrap; }
.pct .text { margin-left: 17px; }
.links { height: 34px; padding-left: 17px; }
.links button { display: flex; align-items: center; margin-right: 12px; }
.links button + button { margin-right: 7px; }
.links .vr { margin: 0 9px 0 1px; }
.links .vr + button { margin-right: 7px; }
.links .vr ~ .vr { margin: 0 7px 0 0; }
.g-task .body { padding-left: 14px; }
.g-task .big:nth-child(-n+2) { width: 78px; }
.pressed { background: #9f9e9d; outline: 1px solid #6f6e6d; }
.g-task .vr { height: 90px; margin: 11px 7px 0 7px; background: #a5a29f; }
.g-ins .body { padding-left: 12px; }
.g-prop .body { padding-left: 13px; }
.g-prop .big { margin-right: 5px; }
.g-edit .body { padding-left: 12px; }
.g-edit .big { margin-right: 4px; }
.big.scrollto span { text-align: center; line-height: 23px; margin-bottom: 11px; }
.collapse { position: absolute; right: 11px; bottom: 6px; }

/* entry bar */
.entry { display: flex; gap: 5px; height: 46px; padding: 10px 17px 9px 8px; flex: none; position: relative; }
.okbox { width: 56px; border: 1px solid #bdbdbd; display: flex; align-items: center; justify-content: space-around; }
.entrybox { flex: 1; border: 1px solid #bdbdbd; padding: 3px 0 4px; display: flex; }
.entrybox input { flex: 1; border: 0; padding: 0; background: #fff; min-width: 0; }

/* work area */
.work { display: flex; flex: 1; min-height: 0; }
.views { width: 64px; flex: none; position: relative; overflow: hidden; border: 1px solid #9a9a9a; border-right: 2px solid #f0f0f0; padding-top: 16px; color: #e6e6e6; text-align: center; line-height: 21px; margin-right: 1px; }
.views a { display: block; padding-bottom: 24px; }
.views svg { width: 32px; height: 26px; margin: 0 auto 6px; }
.views .cur svg { box-shadow: 0 0 0 3px #f6c34c, 0 0 0 4px #ffe9a6; background: #fbd77a; }
.viewmore { position: absolute; right: 2px; bottom: 3px; width: 14px; height: 15px; background: #fff; }
.views .viewmore svg { width: 8px; height: 6px; margin: 0 auto; }
.pane { flex: 1; min-width: 0; display: flex; flex-direction: column; border-right: 1px solid #3d3d3d; padding-bottom: 1px; }
.pane.chart { flex: 0 0 576px; border: 0; }
.pane:not(.chart) { margin-right: 4px; }
.clip { flex: 1; min-height: 0; overflow: hidden; }
.grid { width: 100%; table-layout: fixed; border-collapse: separate; border-spacing: 0; background: #fff; font-size: 22px; color: #000; }
.c-id { width: 78px; } .c-info { width: 81px; } .c-mode { width: 120px; } .c-dur { width: 146px; }
.c-name { width: 470px; } .c-start { width: 225px; } .c-fin { width: 223px; } .c-s { width: 94px; }
.grid thead th { height: 90px; padding: 0; background: #262626; border-right: 1px solid #4a4a4a; border-bottom: 1px solid #2e7031; }
.grid thead .corner { background: #666; border-color: #666 #666 #484848; }
.hd { display: flex; align-items: flex-end; height: 89px; overflow: hidden; padding: 0 7px 0 6px; color: #f2f2f2; font-size: 20px; line-height: 27px; text-align: left; }
.hd i { margin: 0 0 7px auto; border: 5px solid transparent; border-top: 6px solid #fff; border-bottom: 0; flex: none; }
.hd.mid { justify-content: center; padding-bottom: 6px; }
.hd.tall span { align-self: flex-start; margin-top: 2px; }
.grid tbody tr { height: 31px; }
.grid tbody tr.dbl { height: 60px; }
.grid td { padding: 0 0 0 3px; line-height: 24px; border-right: 1px solid #d0d0d0; border-bottom: 1px solid #d0d0d0; vertical-align: top; white-space: nowrap; }
.grid tbody th { padding: 0; background: #666; color: #f0f0f0; font-size: 20px; line-height: 30px; border-bottom: 1px solid #4a4a4a; vertical-align: top; border-right: 1px solid #4a4a4a; }
.grid .name { padding-left: 32px; background: linear-gradient(90deg, #fff2bf 16px, transparent 16px); }
.grid .grp td { font: 700 19px/22px "Liberation Serif", "Noto Sans CJK SC", serif; }
.grid .grp td:nth-child(n+5) { background: #fff2bf; }
.grid .gname { padding-left: 16px; }
.gname::before { content: ""; float: left; margin: 10px 4px 0 -13px; border-left: 9px solid transparent; border-bottom: 9px solid #444; }
.hot td { color: #ee1c23; font-weight: 700; }
.sel td { background: #c5c5c5; border-bottom-color: #2e7031; border-right-color: #a8a8a8; box-shadow: inset 0 2px #2e7031, inset 0 3px #fff, inset 0 -1px #2e7031, inset 0 -2px #fff; }
.grid .sel .name { background: linear-gradient(90deg, #c5bd8f 16px, #c5c5c5 16px); }
.grid tbody .sel th { background: #262626; }
.sel .mode { filter: brightness(.800); }
.mode { width: 24px; height: 20px; margin: 7px 0 -7px 1px; }
.ind { width: 24px; height: 23px; margin: 2px 0 -2px -1px; }

/* scroll bars */
.hbar { display: flex; height: 24px; flex: none; background: #4d4d4d; }
.hbar button, .vbar button { background: #969696; border: 1px solid #333; display: grid; place-items: center; flex: none; }
.hbar button { width: 25px; }
.tri { width: 8px; height: 14px; }
.hbar svg, .vbar svg { fill: #333; }
.thumb { background: #969696; border: 1px solid #3a3a3a; }
.fill { flex: 1; }
.t1 { flex: 9; }
.f1 { flex: 4; }
.gap { width: 15px; }
.t2 { width: 260px; }
.vbar { width: 25px; flex: none; display: flex; flex-direction: column; background: #4d4d4d; margin-bottom: 33px; }
.vbar button { height: 25px; }
.vthumb { flex: 0 0 590px; background: #969696; border: 1px solid #3a3a3a; }

/* chart */
.scale { height: 90px; color: #e2e2e2; overflow: hidden; padding-top: 36px; border-bottom: 1px solid #333; }
.weeks { display: flex; margin-left: -93px; line-height: 28px; font-family: "Liberation Serif", "Noto Sans CJK SC", serif; }
.weeks span { flex: 0 0 217px; text-align: center; border-right: 1px solid #505050; }
.days { display: flex; line-height: 24px; }
.days span { flex: 0 0 31px; text-align: center; border-right: 1px solid #505050; }
.plot { position: relative; background: #fff; }
.back, .front { position: absolute; left: 0; top: 0; }
.rows { position: relative; overflow: hidden; }
.r { display: flex; height: 31px; border-bottom: 1px solid #000; color: #000; font: 700 20px/26px "Liberation Serif", "Noto Sans CJK SC", serif; white-space: nowrap; }
.r.d { height: 60px; }
.r b { margin-left: 12px; }
.r .long { margin-left: 19px; font-size: 19px; }
.bar { height: 17px; margin-top: 4px; background: #88baec; flex: none; }
.dots { height: 17px; margin-top: 4px; border-bottom: 2px dotted #3f8ad8; flex: none; }
.sum { height: 18px; margin-top: 3px; flex: none; border: solid #4d4d4d; border-width: 0 3px; background: linear-gradient(#4d4d4d, #4d4d4d) 0 6px / 100% 6px no-repeat; }
.sum.open { border-left-width: 1px; }

/* status bar */
.status { display: flex; height: 35px; flex: none; background: #c0bbb8; border-top: 2px solid #3c3a3a; align-items: center; padding: 0 6px 0 11px; }
.busy { width: 82px; padding-bottom: 4px; }
.newtask { display: flex; align-items: center; gap: 2px; padding-bottom: 4px; }
.viewbtns { display: flex; margin-left: auto; align-self: stretch; }
.viewbtns button { width: 60px; display: grid; place-items: center; }
.viewbtns .on { background: #9c9997; }
.viewbtns svg { width: 24px; height: 24px; fill: none; stroke: #222; stroke-width: 1.500; }
.zoom { display: flex; align-items: center; gap: 8px; margin-left: 10px; font-size: 20px; }
.zoom input { appearance: none; width: 148px; height: 2px; background: #8d8a88; }
.zoom input::-webkit-slider-thumb { appearance: none; width: 8px; height: 20px; background: #777; }

/* dialog */
.dialog { position: absolute; left: 726px; top: 389px; width: 1109px; height: 637px; background: #f0f0f0; border-radius: 13px; color: #000; box-shadow: 0 0 0 1px #8c8c8c, 0 6px 12px rgba(0,0,0,.300), 0 28px 60px rgba(0,0,0,.400); }
.dtitle { display: flex; justify-content: space-between; align-items: center; height: 43px; padding: 0 16px 2px 11px; border-radius: 13px 13px 0 0; background: linear-gradient(90deg, #faeef8, #f3f0fa 45%); }
.dtabs { display: flex; height: 32px; padding-left: 3px; border-bottom: 1px solid #fff; align-items: flex-end; }
.dtabs button { width: 65px; height: 29px; line-height: 27px; border: 1px solid #fff; border-right: 2px solid #777; border-bottom: 0; }
.dtabs .wide { width: 84px; }
.dtabs .act { height: 32px; width: 68px; }
.dtabs button:disabled { color: #838383; }
.dbody { display: flex; flex-direction: column; padding: 6px 9px 0 13px; }
.dialog label { padding-bottom: 2px; }
.dialog input[type=text], .dialog select { border: 1px solid #9a9a9a; background: #fff; border-radius: 0; padding: 0; }
.dialog select { appearance: none; height: 32px; border-radius: 2px; border-color: #888; background: #fff url("data:image/svg+xml,%3Csvg xmlns='http://www.w3.org/2000/svg' width='20' height='10'%3E%3Cpath d='M2 2l5 5 5-5' fill='none' stroke='%23666' stroke-width='1.400'/%3E%3C/svg%3E") no-repeat right 50%; }
.f-name { display: flex; align-items: center; height: 37px; }
.f-name > label:first-child { width: 80px; }
#nm { flex: 1; height: 37px; min-width: 0; }
.f-name .dlab { width: 93px; padding-left: 14px; }
.f-name .dur { width: 74px; height: 37px; }
.spin { display: flex; flex-direction: column; width: 24px; margin: 0 14px 0 1px; }
.spin button { height: 18px; border: 1px solid #ccc; background: #fdfdfd; display: grid; place-items: center; }
.chk { display: flex; align-items: center; white-space: nowrap; }
.chk input { appearance: none; width: 20px; height: 20px; margin-right: 5px; border-radius: 4px; background: linear-gradient(#9cc4ea, #9cc4ea) 50% 50% / 8px 1px no-repeat #005fb8; }
.f-name .chk { margin-right: 4px; }
.legend { display: flex; align-items: center; gap: 6px; height: 26px; margin: 5px 0 1px 4px; }
.legend::after { content: ""; flex: 1; height: 1px; background: #dadada; }
.f-row { display: flex; align-items: center; padding-left: 14px; }
.f-row > label { flex: 0 0 161px; }
.f-row.dead { margin-top: 15px; }
#dl { width: 498px; }
hr { width: 100%; height: 1px; border: 0; background: #dadada; margin: 17px 0 0; }
hr.in { width: auto; margin: 11px 14px 0; }
.type { margin-top: 35px; padding-right: 14px; }
.combo { position: relative; flex: 0 0 386px; }
.dialog .combo select { width: 100%; display: block; border-color: #0067c0; background-image: url("data:image/svg+xml,%3Csvg xmlns='http://www.w3.org/2000/svg' width='26' height='32'%3E%3Cpath d='M0 0h26v32H0z' fill='%23cce4f7'/%3E%3Cpath d='M.5 0v32' stroke='%230067c0'/%3E%3Cpath d='M8 13l5 5 5-5' fill='none' stroke='%23555' stroke-width='1.400'/%3E%3C/svg%3E"); }
.list { position: absolute; z-index: 2; left: 0; right: 0; top: 31px; list-style: none; background: #fff; border: 1px solid #0067c0; box-shadow: 3px 3px 3px rgba(0,0,0,.450); padding: 0 4px 1px; line-height: 26px; }
.f-row > label.second { flex: 0 0 126px; padding-left: 14px; }
#dt { flex: 1; }
.cols { display: flex; margin-top: 12px; }
.left { width: 562px; }
.left .f-row { height: 39px; }
.left select, .left input { flex: 1; }
.dialog .left input { height: 38px; }
.dim { color: #9a9a9a; text-shadow: 1px 1px #fff; }
.right { padding-left: 13px; }
.right .chk { height: 39px; }
.mile { height: 24px; margin-top: 18px; }
.dbody p { line-height: 24px; margin-top: 9px; }
.btns { display: flex; gap: 16px; margin: 49px 1px 0 1px; }
.btns button { width: 111px; height: 40px; border: 1px solid #cfcfcf; border-radius: 5px; background: #fdfdfd; }
.btns .ok { margin-left: auto; border-color: #0067c0; }

.ink { position: absolute; left: 0; top: 0; pointer-events: none; }
.mark { position: absolute; right: 4px; bottom: 10px; font-size: 51px; line-height: 72px; color: rgba(235,235,235,.800); text-shadow: 1px 2px 2px rgba(60,60,60,.700); white-space: nowrap; }
```
